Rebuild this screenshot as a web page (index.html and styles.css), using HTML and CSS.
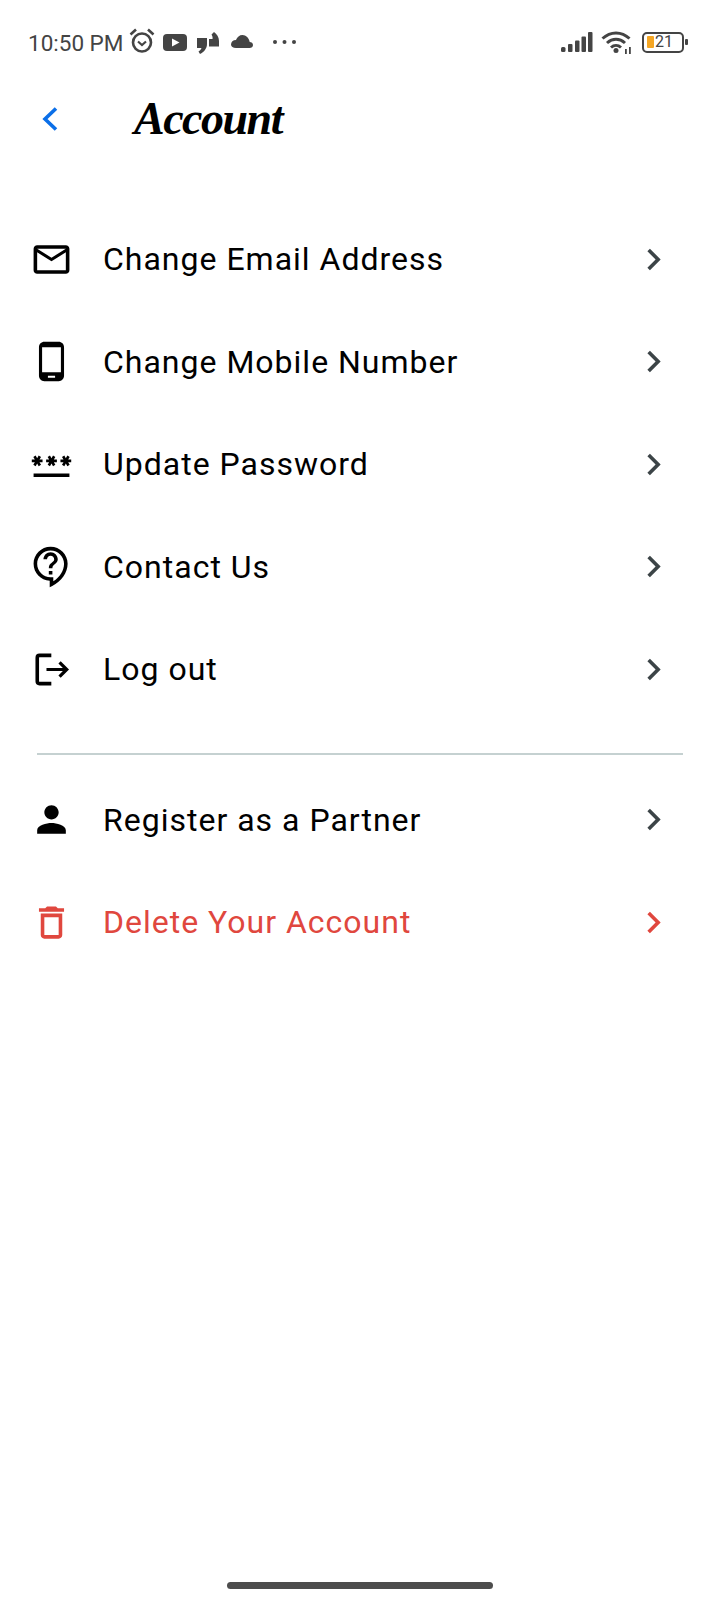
FILE: index.html
```html
<!DOCTYPE html>
<html>

<head>
  <title>Account</title>
  <link rel="stylesheet" href="styles.css">
</head>

<body>
  <div class="status">
    <span class="clock">10:50 PM</span>
    <svg class="st-alarm" viewBox="0 0 26 26"><circle cx="13" cy="14.500" r="9" fill="none" stroke="#444" stroke-width="2.600"/><path d="M9 13.500l4 3.500 4-3.500" fill="none" stroke="#444" stroke-width="2.200"/><path d="M1.500 6.500L7 1.500M24.500 6.500L19 1.500" stroke="#444" stroke-width="2.600"/></svg>
    <svg class="st-yt" viewBox="0 0 24 17"><rect width="24" height="17" rx="4" fill="#444"/><path d="M9 4.500l7.500 4-7.500 4z" fill="#fff"/></svg>
    <svg class="st-quote" viewBox="0 0 22 25"><path d="M0 8h10v6c0 4.500-3 8-7 10l-1.500-2.500c1.500-1 2.500-2 3-3.500H0zM12 9h3.500c.3-1.500 0-3-1-4.500L17 2c2.800 2 5 5 5 9v5.500H12z" fill="#444"/></svg>
    <svg class="st-cloud" viewBox="0 0 22 13"><path d="M5 13h13.500c2 0 3.500-1.300 3.500-3 0-1.800-1.500-3-3.300-3C18 3 15 0 11.500 0 8.500 0 6 2 5 5c-3 0-5 2-5 4.500C0 11.500 2 13 5 13z" fill="#444"/></svg>
    <svg class="st-dots" viewBox="0 0 23 4"><circle cx="2" cy="2" r="2" fill="#444"/><circle cx="11.500" cy="2" r="2" fill="#444"/><circle cx="21" cy="2" r="2" fill="#444"/></svg>
    <span class="st-space"></span>
    <svg class="st-signal" viewBox="0 0 32 21"><rect x="0" y="15" width="4.500" height="5" rx="1.500" fill="#444"/><rect x="7" y="12" width="4.500" height="8" rx="1" fill="#444"/><rect x="14" y="8.500" width="4.500" height="11.500" rx="1" fill="#444"/><rect x="20.500" y="4.500" width="4.500" height="15.500" rx="1" fill="#444"/><rect x="27" y="0" width="4.500" height="20" rx="1" fill="#444"/></svg>
    <svg class="st-wifi" viewBox="0 0 32 24"><path d="M1.500 8.500C9.500 1 20.500 1 28.500 8.500M6 13C11.500 8 18.500 8 24 13M10 17.500c3-2.700 7-2.700 10 0" fill="none" stroke="#444" stroke-width="3"/><circle cx="15" cy="20.500" r="2.500" fill="#444"/><path d="M24 19h1.800v5H24zM28 17h1.800v7H28z" fill="#444"/></svg>
    <div class="battery">
      <div class="bat-body"><span class="bat-fill"></span><span class="bat-num">21</span></div>
      <span class="bat-nub"></span>
    </div>
  </div>

  <div class="header">
    <svg class="back" viewBox="0 0 18 26"><path d="M15 2.500L4 13l11 10.500" fill="none" stroke="#0b6fe8" stroke-width="3.600"/></svg>
    <h1 class="title">Account</h1>
  </div>

  <div class="list">
    <div class="row">
      <svg class="icon" viewBox="0 0 24 24"><path d="M20 4H4c-1.100 0-1.990.9-1.990 2L2 18c0 1.100.9 2 2 2h16c1.100 0 2-.9 2-2V6c0-1.100-.9-2-2-2zm0 14H4V8l8 5 8-5v10zm-8-7L4 6h16l-8 5z"/></svg>
      <span class="label">Change Email Address</span>
      <svg class="chev" viewBox="0 0 24 24"><path d="M10 6L8.590 7.410 13.170 12l-4.580 4.590L10 18l6-6z"/></svg>
    </div>
    <div class="row">
      <svg class="icon" viewBox="0 0 24 24"><path d="M16 1H8C6.340 1 5 2.340 5 4v16c0 1.660 1.340 3 3 3h8c1.660 0 3-1.340 3-3V4c0-1.660-1.340-3-3-3zm-2 20h-4v-1h4v1zm3.250-3H6.750V4h10.500v14z"/></svg>
      <span class="label">Change Mobile Number</span>
      <svg class="chev" viewBox="0 0 24 24"><path d="M10 6L8.590 7.410 13.170 12l-4.580 4.590L10 18l6-6z"/></svg>
    </div>
    <div class="row">
      <svg class="icon" viewBox="0 0 24 24"><path d="M2 17h20v2H2v-2zm1.150-4.050L4 11.470l.85 1.480 1.300-.75-.85-1.480H7v-1.500H5.300l.85-1.470L4.850 7 4 8.470 3.150 7l-1.300.75.85 1.470H1v1.500h1.700l-.85 1.480 1.300.75zm6.700-.75l1.300.75.85-1.480.85 1.480 1.300-.75-.85-1.480H15v-1.500h-1.700l.85-1.470-1.300-.75L12 8.470 11.150 7l-1.300.75.85 1.470H9v1.500h1.700l-.85 1.480zM23 9.220h-1.700l.85-1.470-1.300-.75L20 8.470 19.150 7l-1.300.75.85 1.470H17v1.500h1.700l-.85 1.480 1.300.75.85-1.480.85 1.480 1.300-.75-.85-1.480H23v-1.500z"/></svg>
      <span class="label">Update Password</span>
      <svg class="chev" viewBox="0 0 24 24"><path d="M10 6L8.590 7.410 13.170 12l-4.580 4.590L10 18l6-6z"/></svg>
    </div>
    <div class="row">
      <svg class="icon" viewBox="0 0 24 24"><path d="M11 23.590v-3.600c-5.010-.26-9-4.420-9-9.490C2 5.260 6.260 1 11.500 1S21 5.260 21 10.500c0 4.950-3.440 9.930-8.570 12.400l-1.430.69zM11.500 3C7.360 3 4 6.360 4 10.500S7.360 18 11.500 18H13v2.300c3.640-2.300 6-6.080 6-9.800C19 6.360 15.640 3 11.500 3zm-1 11.500h2v2h-2zm2-1.500h-2c0-3.250 3-3 3-5 0-1.100-.9-2-2-2s-2 .9-2 2h-2c0-2.210 1.790-4 4-4s4 1.790 4 4c0 2.500-3 2.750-3 5z"/></svg>
      <span class="label">Contact Us</span>
      <svg class="chev" viewBox="0 0 24 24"><path d="M10 6L8.590 7.410 13.170 12l-4.580 4.590L10 18l6-6z"/></svg>
    </div>
    <div class="row">
      <svg class="icon" viewBox="0 0 24 24"><path d="M11.900 4.100H5.300C4.500 4.100 4.050 4.600 4.050 5.400v13.200c0 .8.450 1.300 1.250 1.300h6.600" fill="none" stroke="#000" stroke-width="2"/><path d="M9.200 12h11M16.500 8l4 4-4 4" fill="none" stroke="#000" stroke-width="1.800"/></svg>
      <span class="label">Log out</span>
      <svg class="chev" viewBox="0 0 24 24"><path d="M10 6L8.590 7.410 13.170 12l-4.580 4.590L10 18l6-6z"/></svg>
    </div>
  </div>

  <div class="divider"></div>

  <div class="list">
    <div class="row">
      <svg class="icon" viewBox="0 0 24 24"><path d="M12 12c2.210 0 4-1.790 4-4s-1.790-4-4-4-4 1.790-4 4 1.790 4 4 4zm0 2c-2.670 0-8 1.340-8 4v2h16v-2c0-2.660-5.330-4-8-4z"/></svg>
      <span class="label">Register as a Partner</span>
      <svg class="chev" viewBox="0 0 24 24"><path d="M10 6L8.590 7.410 13.170 12l-4.580 4.590L10 18l6-6z"/></svg>
    </div>
    <div class="row danger">
      <svg class="icon" viewBox="0 0 24 24"><path d="M6 19c0 1.100.9 2 2 2h8c1.100 0 2-.9 2-2V7H6v12zM8 9h8v10H8V9zm7.500-5l-1-1h-5l-1 1H5v2h14V4z"/></svg>
      <span class="label">Delete Your Account</span>
      <svg class="chev" viewBox="0 0 24 24"><path d="M10 6L8.590 7.410 13.170 12l-4.580 4.590L10 18l6-6z"/></svg>
    </div>
  </div>

  <div class="home-bar"></div>
</body>

</html>
```

FILE: styles.css
```css
* {
  box-sizing: border-box;
}

body {
  margin: 0;
  width: 720px;
  height: 1600px;
  background-color: #ffffff;
  font-family: Roboto, sans-serif;
  position: relative;
  overflow: hidden;
}

.status {
  display: flex;
  align-items: center;
  height: 84px;
  padding: 0 32px 0 28px;
  color: #444444;
}

.clock {
  font-size: 22.500px;
  width: 101px;
  padding-top: 1px;
}

.st-alarm {
  width: 26px;
  height: 26px;
  margin-top: -2px;
}

.st-yt {
  width: 24px;
  height: 17px;
  margin-left: 8px;
}

.st-quote {
  width: 22px;
  height: 25px;
  margin-left: 10px;
}

.st-cloud {
  width: 22px;
  height: 13px;
  margin-left: 12px;
  margin-top: -2px;
}

.st-dots {
  width: 23px;
  height: 4px;
  margin-left: 20px;
}

.st-space {
  flex: 1;
}

.st-signal {
  width: 32px;
  height: 21px;
}

.st-wifi {
  width: 32px;
  height: 24px;
  margin-left: 8px;
}

.battery {
  display: flex;
  align-items: center;
  margin-left: 9px;
}

.bat-body {
  display: flex;
  align-items: center;
  width: 42px;
  height: 21px;
  border: 2.500px solid #444444;
  border-radius: 5px;
  padding-left: 3px;
}

.bat-fill {
  width: 7px;
  height: 12px;
  background-color: #f5a623;
  border-radius: 1px;
}

.bat-num {
  font-size: 16px;
  line-height: 16px;
  margin-left: 1px;
}

.bat-nub {
  width: 3px;
  height: 6px;
  margin-left: 1px;
  background-color: #444444;
  border-radius: 1px;
}

.header {
  display: flex;
  align-items: center;
  height: 70px;
  padding-left: 41px;
}

.back {
  width: 18px;
  height: 26px;
}

.title {
  margin: 0 0 0 75px;
  font-family: "Liberation Serif", serif;
  font-style: italic;
  font-weight: 700;
  font-size: 46px;
  letter-spacing: -1.500px;
  line-height: 50px;
  color: #000000;
}

.list {
  display: flex;
  flex-direction: column;
}

.header + .list {
  margin-top: 54px;
}

.row {
  display: flex;
  align-items: center;
  height: 102.500px;
  padding: 0 45px 0 30px;
  color: #000000;
}

.icon {
  width: 43px;
  height: 43px;
  flex-shrink: 0;
  fill: #000000;
}

.label {
  flex: 1;
  margin-left: 30px;
  font-size: 32px;
  letter-spacing: 1px;
}

.chev {
  width: 43px;
  height: 43px;
  flex-shrink: 0;
  fill: #3c4447;
}

.danger .label {
  color: #e0473e;
}

.danger .icon,
.danger .chev {
  fill: #e0473e;
}

.divider {
  height: 2px;
  margin: 32px 37px 14px 37px;
  background-color: #c5d1d1;
}

/* gesture pill at the bottom */
.home-bar {
  position: absolute;
  left: 227px;
  bottom: 11px;
  width: 266px;
  height: 7px;
  border-radius: 4px;
  background-color: #4d4d4d;
}
```
